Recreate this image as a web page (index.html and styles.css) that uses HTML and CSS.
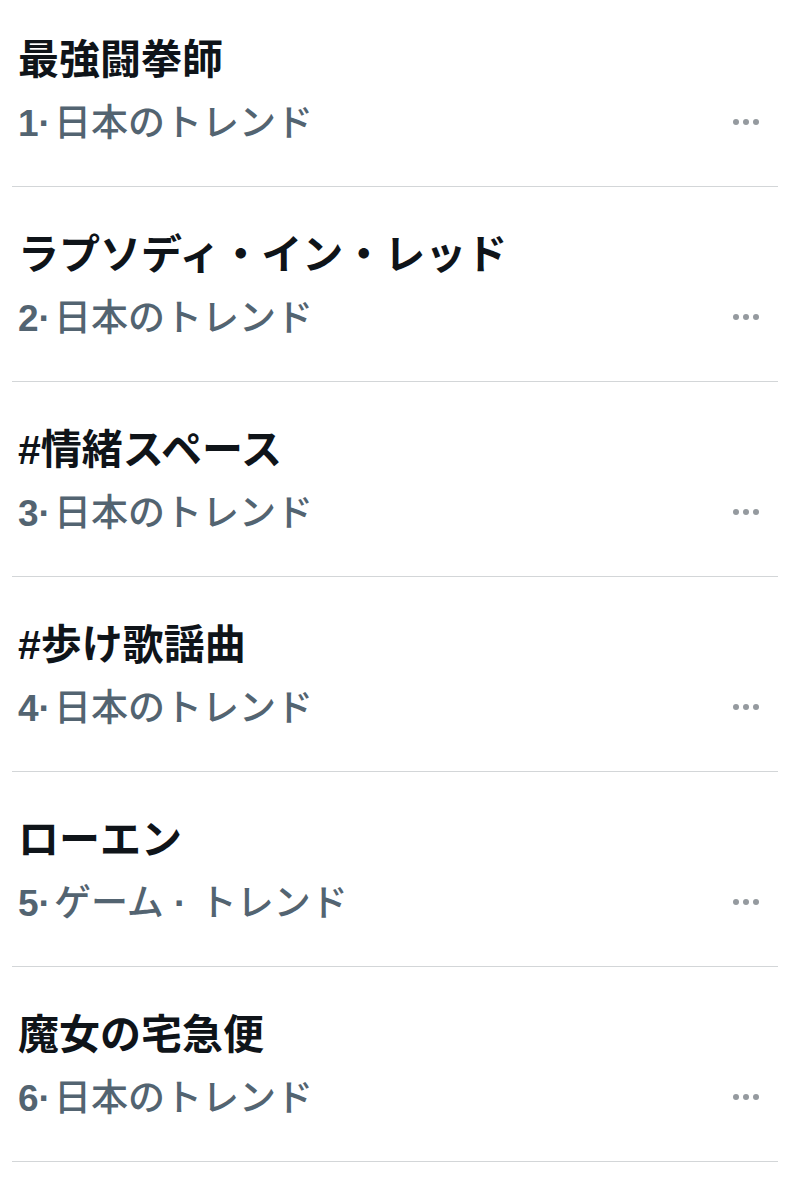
FILE: index.html
```html
<!DOCTYPE html>
<html lang="ja">
<head>
<meta charset="UTF-8">
<title>トレンド</title>
<link rel="stylesheet" href="styles.css">
</head>
<body>

<div class="trends">
    <div class="trend">
        <div class="title">最強闘拳師</div>
        <div class="meta"><span class="num">1·</span>日本のトレンド</div>
        <span class="more"><i></i><i></i><i></i></span>
    </div>
    <div class="trend">
        <div class="title">ラプソディ・イン・レッド</div>
        <div class="meta"><span class="num">2·</span>日本のトレンド</div>
        <span class="more"><i></i><i></i><i></i></span>
    </div>
    <div class="trend">
        <div class="title">#情緒スペース</div>
        <div class="meta"><span class="num">3·</span>日本のトレンド</div>
        <span class="more"><i></i><i></i><i></i></span>
    </div>
    <div class="trend">
        <div class="title">#歩け歌謡曲</div>
        <div class="meta"><span class="num">4·</span>日本のトレンド</div>
        <span class="more"><i></i><i></i><i></i></span>
    </div>
    <div class="trend">
        <div class="title">ローエン</div>
        <div class="meta"><span class="num">5·</span>ゲーム<span class="num"> · </span>トレンド</div>
        <span class="more"><i></i><i></i><i></i></span>
    </div>
    <div class="trend">
        <div class="title">魔女の宅急便</div>
        <div class="meta"><span class="num">6·</span>日本のトレンド</div>
        <span class="more"><i></i><i></i><i></i></span>
    </div>
</div>

</body>
</html>
```

FILE: styles.css
```css
body {
    margin: 0;
    background: #fff;
    font-family: "Liberation Sans", "Noto Sans CJK JP", sans-serif;
}
.trends {
    margin: 0 18px 0 12px;
}
.trend {
    display: grid;
    grid-template-columns: 1fr auto;
    row-gap: 10px;
    padding: 43px 0 41px 6px;
    border-bottom: 1px solid #d3d6d8;
}
.trend:first-child {
    padding-top: 35px;
}
.title {
    grid-column: 1;
    font-size: 41px;
    line-height: 50px;
    font-weight: 700;
    color: #0f1419;
}
.meta {
    grid-column: 1;
    height: 50px;
    font-family: "Noto Sans CJK JP", sans-serif;
    font-size: 37px;
    line-height: 50px;
    font-weight: 500;
    color: #536471;
}
.num {
    font-family: "Liberation Sans", sans-serif;
    font-weight: 700;
    line-height: 0;
    padding-right: 3px;
}
.more {
    grid-column: 2;
    grid-row: 2;
    display: flex;
    align-items: center;
    gap: 4px;
    padding: 4px 19px 0 0;
}
.more i {
    width: 6px;
    height: 6px;
    border-radius: 50%;
    background: #959a9f;
}
```
